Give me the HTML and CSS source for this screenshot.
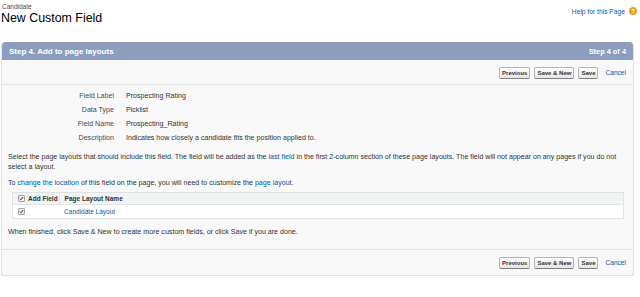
FILE: index.html
```html
<!DOCTYPE html>
<html lang="en">
<head>
  <meta charset="UTF-8">
  <title>New Custom Field</title>
  <link rel="stylesheet" href="styles.css">
</head>
<body>
  <div class="page-head">
    <div class="titles">
      <div class="crumb">Candidate</div>
      <h1>New Custom Field</h1>
    </div>
    <a class="help" href="#">Help for this Page <span class="help-icon">?</span></a>
  </div>

  <div class="panel">
    <div class="panel-header">
      <h2>Step 4. Add to page layouts</h2>
      <span class="step">Step 4 of 4</span>
    </div>

    <!-- top buttons -->
    <div class="btn-row top">
      <button>Previous</button>
      <button>Save &amp; New</button>
      <button>Save</button>
      <a class="cancel" href="#">Cancel</a>
    </div>

    <div class="panel-body">
      <div class="detail">
        <div class="detail-row"><span class="label">Field Label</span><span class="value">Prospecting Rating</span></div>
        <div class="detail-row"><span class="label">Data Type</span><span class="value">Picklist</span></div>
        <div class="detail-row"><span class="label">Field Name</span><span class="value">Prospecting_Rating</span></div>
        <div class="detail-row"><span class="label">Description</span><span class="value">Indicates how closely a candidate fits the position applied to.</span></div>
      </div>

      <p class="info">Select the page layouts that should include this field. The field will be added as the <a href="#">last field</a> in the first 2-column section of these page layouts. The field will not appear on any pages if you do not select a layout.</p>
      <p class="info">To <a href="#">change the location</a> of this field on the page, you will need to customize the <a href="#">page layout</a>.</p>

      <table class="layouts">
        <thead>
          <tr>
            <th class="col-check"><span class="check"><svg viewBox="0 0 8 8"><path d="M1.5 4.2 L3.2 6 L6.6 1.6" fill="none" stroke="#222" stroke-width="1.4"/></svg></span>Add Field</th>
            <th>Page Layout Name</th>
          </tr>
        </thead>
        <tbody>
          <tr>
            <td class="col-check"><span class="check"><svg viewBox="0 0 8 8"><path d="M1.5 4.2 L3.2 6 L6.6 1.6" fill="none" stroke="#222" stroke-width="1.4"/></svg></span></td>
            <td><a href="#">Candidate Layout</a></td>
          </tr>
        </tbody>
      </table>

      <p class="info done">When finished, click Save &amp; New to create more custom fields, or click Save if you are done.</p>
    </div>

    <!-- bottom buttons -->
    <div class="btn-row bottom">
      <button>Previous</button>
      <button>Save &amp; New</button>
      <button>Save</button>
      <a class="cancel" href="#">Cancel</a>
    </div>
  </div>
</body>
</html>
```

FILE: styles.css
```css
body {
  font-family: "Liberation Sans", Arial, sans-serif;
  margin: 0;
  padding: 3px 6px 0 1px;
  color: #333;
  background: #fff;
}
a {
  color: #015ba7;
  text-decoration: none;
}
.page-head {
  display: flex;
  justify-content: space-between;
  align-items: flex-start;
  height: 39px;
}
.crumb {
  font-size: 6.5px;
  color: #4a4a56;
  line-height: 8px;
  padding-left: 1px;
}
h1 {
  margin: 0;
  font-size: 12.4px;
  font-weight: normal;
  color: #000;
  line-height: 14px;
}
.help {
  display: flex;
  align-items: center;
  gap: 4px;
  font-size: 6.7px;
  color: #015ba7;
  padding-top: 4px;
  margin-right: -3px;
}
.help-icon {
  display: inline-flex;
  align-items: center;
  justify-content: center;
  width: 8px;
  height: 8px;
  border-radius: 50%;
  background: #e8a01c;
  color: #fff;
  font-size: 6px;
  font-weight: bold;
}
.panel {
  background: #f8f8f8;
  border: 1px solid #e3e3e3;
  border-top: 0;
  border-radius: 4px;
  box-shadow: 0 1px 1px rgba(0, 0, 0, 0.12);
}
.panel-header {
  display: flex;
  justify-content: space-between;
  align-items: center;
  height: 18px;
  padding: 0 7px;
  background: #8d9dbd;
  border-radius: 4px 4px 0 0;
  color: #fff;
}
.panel-header h2 {
  margin: 0;
  font-size: 8px;
  font-weight: bold;
}
.step {
  font-size: 7.4px;
  font-weight: bold;
}
.btn-row {
  display: flex;
  justify-content: flex-end;
  align-items: center;
  gap: 4px;
  padding: 0 7px;
}
.btn-row.top {
  height: 23px;
  border-bottom: 1px solid #e3e3e3;
  padding-top: 1px;
}
.btn-row.bottom {
  height: 25px;
  border-top: 1px solid #e3e3e3;
}
button {
  font-family: "Liberation Sans", Arial, sans-serif;
  font-size: 6px;
  font-weight: bold;
  color: #333;
  height: 12px;
  padding: 0 2px;
  border: 1px solid #b5b5b5;
  border-bottom-color: #7f7f7f;
  border-radius: 2px;
  background: linear-gradient(#fdfdfd, #e6e6e6);
}
.cancel {
  font-size: 6.6px;
  margin-left: 3px;
}
.panel-body {
  padding: 4px 10px 12px 6px;
  font-size: 7.1px;
}
.detail-row {
  display: flex;
  height: 14px;
  align-items: center;
}
.label {
  width: 118px;
  text-align: right;
  color: #4a4a56;
  padding-right: 12px;
  box-sizing: border-box;
}
.value {
  color: #333;
}
.info {
  margin: 7px 0 0;
  line-height: 10px;
  color: #333;
}
.info + .info {
  margin-top: 6px;
}
.layouts {
  margin: 4px 0 0 4px;
  width: 612px;
  border-collapse: collapse;
  border: 1px solid #e0e3e5;
  font-size: 6.5px;
}
.layouts th {
  background: #f2f3f3;
  text-align: left;
  font-weight: bold;
  color: #333;
  height: 11px;
  padding: 0 5px;
  white-space: nowrap;
  border-bottom: 1px solid #e0e3e5;
}
.layouts .col-check {
  width: 1px;
  padding: 0 1px 0 5px;
}
.layouts th.col-check {
  border-right: 1px solid #e0e3e5;
}
.layouts td {
  background: #fff;
  height: 13px;
  padding: 0 5px;
}
.check {
  display: inline-block;
  width: 7px;
  height: 7px;
  border: 1px solid #a4a4a4;
  border-radius: 1px;
  background: #eee;
  box-sizing: border-box;
  vertical-align: -1px;
  margin-right: 3px;
}
.check svg {
  display: block;
  width: 100%;
  height: 100%;
}
.info.done {
  margin-top: 8px;
}
```
